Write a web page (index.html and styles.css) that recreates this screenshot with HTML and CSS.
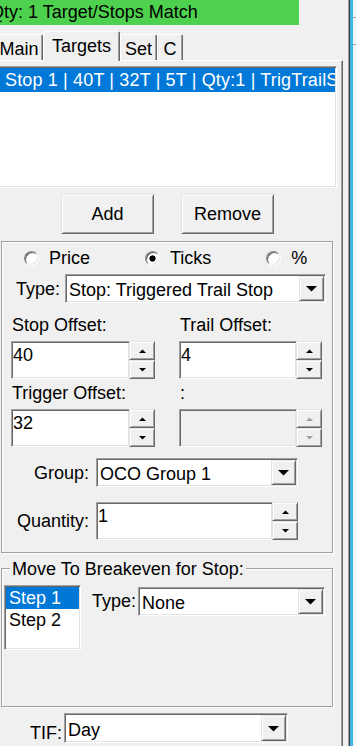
FILE: index.html
```html
<!DOCTYPE html>
<html lang="en">
<head>
<meta charset="UTF-8">
<meta name="viewport" content="width=device-width, initial-scale=1.0">
<title>Order Targets</title>
<link rel="stylesheet" href="styles.css">
</head>
<body>
  <div class="form">
    <!-- Status strip -->
    <div class="status">Qty: 1 Target/Stops Match</div>

    <!-- Tab strip -->
    <div class="tabs">
      <div class="tab tab-main">Main</div>
      <div class="tab tab-targets active">Targets</div>
      <div class="tab tab-set">Set</div>
      <div class="tab tab-c">C</div>
    </div>

    <div class="panel">
      <!-- Target / stop list -->
      <div class="sunken listbox target-list">
        <div class="list-item selected">Stop 1 | 40T | 32T | 5T | Qty:1 | TrigTrailStop</div>
      </div>

      <div class="button-row">
        <button class="raised btn">Add</button>
        <button class="raised btn">Remove</button>
      </div>

      <!-- Offsets group -->
      <div class="group offsets-group">
        <div class="radio-row">
          <div class="radio"><span class="radio-dot"></span>Price</div>
          <div class="radio"><span class="radio-dot checked"></span>Ticks</div>
          <div class="radio"><span class="radio-dot"></span>%</div>
        </div>

        <div class="type-row">
          <span class="type-label">Type:</span>
          <div class="sunken combo type-combo">
            <span class="combo-text">Stop: Triggered Trail Stop</span>
            <span class="raised combo-btn"><svg width="11" height="6" viewBox="0 0 11 6"><polygon points="0,0 11,0 5.5,5.5"/></svg></span>
          </div>
        </div>

        <div class="offset-grid">
          <div class="field">
            <div class="field-label">Stop Offset:</div>
            <div class="spin">
              <div class="sunken spin-edit">40</div>
              <div class="spin-buttons">
                <span class="raised spin-btn"><svg width="7" height="4" viewBox="0 0 7 4"><polygon points="0,4 7,4 3.5,0.5"/></svg></span>
                <span class="raised spin-btn"><svg width="7" height="4" viewBox="0 0 7 4"><polygon points="0,0 7,0 3.5,3.5"/></svg></span>
              </div>
            </div>
          </div>
          <div class="field">
            <div class="field-label">Trail Offset:</div>
            <div class="spin">
              <div class="sunken spin-edit">4</div>
              <div class="spin-buttons">
                <span class="raised spin-btn"><svg width="7" height="4" viewBox="0 0 7 4"><polygon points="0,4 7,4 3.5,0.5"/></svg></span>
                <span class="raised spin-btn"><svg width="7" height="4" viewBox="0 0 7 4"><polygon points="0,0 7,0 3.5,3.5"/></svg></span>
              </div>
            </div>
          </div>
          <div class="field">
            <div class="field-label">Trigger Offset:</div>
            <div class="spin">
              <div class="sunken spin-edit">32</div>
              <div class="spin-buttons">
                <span class="raised spin-btn"><svg width="7" height="4" viewBox="0 0 7 4"><polygon points="0,4 7,4 3.5,0.5"/></svg></span>
                <span class="raised spin-btn"><svg width="7" height="4" viewBox="0 0 7 4"><polygon points="0,0 7,0 3.5,3.5"/></svg></span>
              </div>
            </div>
          </div>
          <div class="field">
            <div class="field-label">:</div>
            <div class="spin disabled">
              <div class="sunken spin-edit"></div>
              <div class="spin-buttons">
                <span class="raised spin-btn"><svg width="7" height="4" viewBox="0 0 7 4"><polygon points="0,4 7,4 3.5,0.5"/></svg></span>
                <span class="raised spin-btn"><svg width="7" height="4" viewBox="0 0 7 4"><polygon points="0,0 7,0 3.5,3.5"/></svg></span>
              </div>
            </div>
          </div>
        </div>

        <div class="form-row group-row">
          <span class="row-label">Group:</span>
          <div class="sunken combo group-combo">
            <span class="combo-text">OCO Group 1</span>
            <span class="raised combo-btn"><svg width="11" height="6" viewBox="0 0 11 6"><polygon points="0,0 11,0 5.5,5.5"/></svg></span>
          </div>
        </div>

        <div class="form-row qty-row">
          <span class="row-label">Quantity:</span>
          <div class="spin qty-spin">
            <div class="sunken spin-edit">1</div>
            <div class="spin-buttons">
              <span class="raised spin-btn"><svg width="7" height="4" viewBox="0 0 7 4"><polygon points="0,4 7,4 3.5,0.5"/></svg></span>
              <span class="raised spin-btn"><svg width="7" height="4" viewBox="0 0 7 4"><polygon points="0,0 7,0 3.5,3.5"/></svg></span>
            </div>
          </div>
        </div>
      </div>

      <!-- Breakeven group -->
      <div class="group breakeven-group">
        <span class="legend">Move To Breakeven for Stop:</span>
        <div class="breakeven-body">
          <div class="sunken listbox step-list">
            <div class="list-item selected">Step 1</div>
            <div class="list-item">Step 2</div>
          </div>
          <span class="step-type-label">Type:</span>
          <div class="sunken combo step-combo">
            <span class="combo-text">None</span>
            <span class="raised combo-btn"><svg width="11" height="6" viewBox="0 0 11 6"><polygon points="0,0 11,0 5.5,5.5"/></svg></span>
          </div>
        </div>
      </div>

      <div class="tif-row">
        <span class="tif-label">TIF:</span>
        <div class="sunken combo tif-combo">
          <span class="combo-text">Day</span>
          <span class="raised combo-btn"><svg width="11" height="6" viewBox="0 0 11 6"><polygon points="0,0 11,0 5.5,5.5"/></svg></span>
        </div>
      </div>
    </div>
  </div>

  <!-- Window edge -->
  <div class="edge"></div>
</body>
</html>
```

FILE: styles.css
```css
/* Classic dialog look */
body {
  margin: 0;
  width: 356px;
  height: 746px;
  overflow: hidden;
  display: flex;
  background-color: #f0f0f0;
  color: #000;
  font-family: "Liberation Sans", Arial, sans-serif;
  font-size: 18px;
  line-height: 20px;
}
.form {
  width: 348px;
  flex: none;
  overflow: hidden;
}
.edge {
  flex: 1;
  background:
    linear-gradient(#a0a0a0, #a0a0a0) 5px 17px / 3px 1px no-repeat,
    linear-gradient(#a0a0a0, #a0a0a0) 5px 44px / 3px 1px no-repeat,
    linear-gradient(to right, #a0a0a0 0 1px, #3c3c3c 1px 2px, #3db5e6 2px 5px, #f7f7f7 5px);
}

/* 3D borders */
.sunken {
  box-sizing: border-box;
  border: 1px solid;
  border-color: #a0a0a0 #fff #fff #a0a0a0;
  box-shadow: inset 1px 1px #696969, inset -1px -1px #e3e3e3;
  padding: 1px;
  background-color: #fff;
}
.raised {
  box-sizing: border-box;
  border: 1px solid;
  border-color: #e3e3e3 #696969 #696969 #e3e3e3;
  box-shadow: inset 1px 1px #fff, inset -1px -1px #a0a0a0;
  background-color: #f0f0f0;
}

/* Status */
.status {
  width: 299px;
  height: 25px;
  line-height: 25px;
  background-color: #4ed14e;
  text-indent: -10px;
  white-space: nowrap;
  overflow: hidden;
}

/* Tabs */
.tabs {
  display: flex;
  align-items: flex-end;
  height: 29px;
  margin-top: 6px;
  margin-left: -5px;
}
.tab {
  box-sizing: border-box;
  height: 26px;
  padding-top: 4px;
  border-top: 1px solid #fff;
  border-left: 1px solid #fff;
  border-right: 1px solid #696969;
  box-shadow: inset -1px 0 #a0a0a0;
  border-radius: 2px 2px 0 0;
  text-align: center;
  white-space: nowrap;
}
.tab.active {
  height: 30px;
  margin-bottom: -1px;
  position: relative;
  z-index: 1;
  background-color: #f0f0f0;
}
.tab-main { width: 48px; }
.tab-targets { width: 77px; }
.tab-set { width: 37px; }
.tab-c { width: 26px; }

.panel {
  box-sizing: border-box;
  width: 343px;
  height: 700px;
  border-top: 1px solid #fff;
  border-right: 1px solid #696969;
  box-shadow: inset -1px 0 #a0a0a0;
}

/* List boxes */
.list-item {
  white-space: nowrap;
  overflow: hidden;
}
.list-item.selected {
  background-color: #0078d7;
  color: #fff;
}
.target-list {
  width: 339px;
  height: 122px;
  margin: 5px 0 0 -2px;
}
.target-list .list-item {
  height: 24px;
  padding: 1px 0 0 5px;
  box-sizing: border-box;
  line-height: 23px;
  letter-spacing: 0.15px;
}

.button-row {
  display: flex;
  gap: 27px;
  margin: 6px 0 0 61px;
}
.btn {
  width: 93px;
  height: 40px;
  padding: 0;
  font: inherit;
  color: #000;
}

/* Group boxes */
.group {
  box-sizing: border-box;
  width: 332px;
  margin-left: 1px;
  border: 1px solid #a0a0a0;
  box-shadow: inset 1px 1px #fff, 1px 1px #fff;
}
.offsets-group {
  height: 312px;
  margin-top: 7px;
}
.radio-row {
  display: flex;
  align-items: center;
  gap: 55px;
  height: 32px;
  padding-left: 22px;
}
.radio {
  display: flex;
  align-items: center;
  gap: 10px;
}
.radio-dot {
  box-sizing: border-box;
  width: 15px;
  height: 15px;
  border-radius: 50%;
  border: 1px solid;
  border-color: #8c8c8c #fff #fff #8c8c8c;
  box-shadow: inset 1px 1px #5a5a5a, inset -1px -1px #e3e3e3;
  background-color: #fff;
}
.radio-dot.checked {
  background: radial-gradient(circle, #000 0 2.8px, #fff 3.4px);
}

.type-row {
  display: flex;
  align-items: center;
  height: 29px;
  padding-left: 14px;
}
.type-label { width: 49px; }

/* Combo boxes */
.combo {
  display: flex;
  height: 29px;
}
.combo-text {
  flex: 1;
  padding: 4px 0 0 2px;
  white-space: nowrap;
  overflow: hidden;
}
.combo-btn {
  width: 25px;
  display: flex;
  align-items: center;
  justify-content: center;
}
.combo-btn svg { margin-top: 1px; }
.type-combo { width: 261px; }

/* Spin edits */
.offset-grid {
  display: grid;
  grid-template-columns: 144px 143px;
  column-gap: 24px;
  row-gap: 4px;
  margin-top: 12px;
  padding-left: 9px;
}
.field-label {
  padding-left: 1px;
  margin-bottom: 6px;
}
.spin {
  display: flex;
  height: 38px;
}
.spin-edit {
  flex: 1;
  border-right: 0;
  padding: 3px 1px 1px 1px;
}
.spin-buttons {
  width: 26px;
  display: flex;
  flex-direction: column;
}
.spin-btn {
  flex: 1;
  display: flex;
  align-items: center;
  justify-content: center;
}
.spin.disabled .spin-edit { background-color: #f0f0f0; }
.spin.disabled svg { fill: #a0a0a0; }

.form-row {
  display: flex;
  align-items: center;
}
.row-label {
  width: 87px;
  margin-right: 7px;
  text-align: right;
}
.group-row { margin-top: 11px; }
.group-combo { width: 202px; }
.qty-row { margin-top: 15px; }
.qty-spin { width: 202px; }

/* Breakeven */
.breakeven-group {
  height: 139px;
  margin-top: 15px;
}
.legend {
  display: table;
  margin: -10px 0 0 8px;
  padding: 0 2px;
  background-color: #f0f0f0;
}
.breakeven-body {
  display: flex;
  align-items: flex-start;
  margin-top: 6px;
}
.step-list {
  width: 77px;
  height: 65px;
  margin-left: 2px;
}
.step-list .list-item {
  height: 22px;
  padding: 1px 0 0 3px;
  box-sizing: border-box;
  line-height: 21px;
}
.step-type-label {
  margin: 6px 2px 0 11px;
}
.step-combo {
  width: 187px;
  margin-top: 2px;
}

/* TIF */
.tif-row {
  display: flex;
  align-items: flex-end;
  margin: 6px 0 0 30px;
}
.tif-label { margin-right: 2px; }
.tif-combo {
  width: 224px;
  height: 30px;
}
.tif-combo .combo-text { padding-top: 5px; }
```
